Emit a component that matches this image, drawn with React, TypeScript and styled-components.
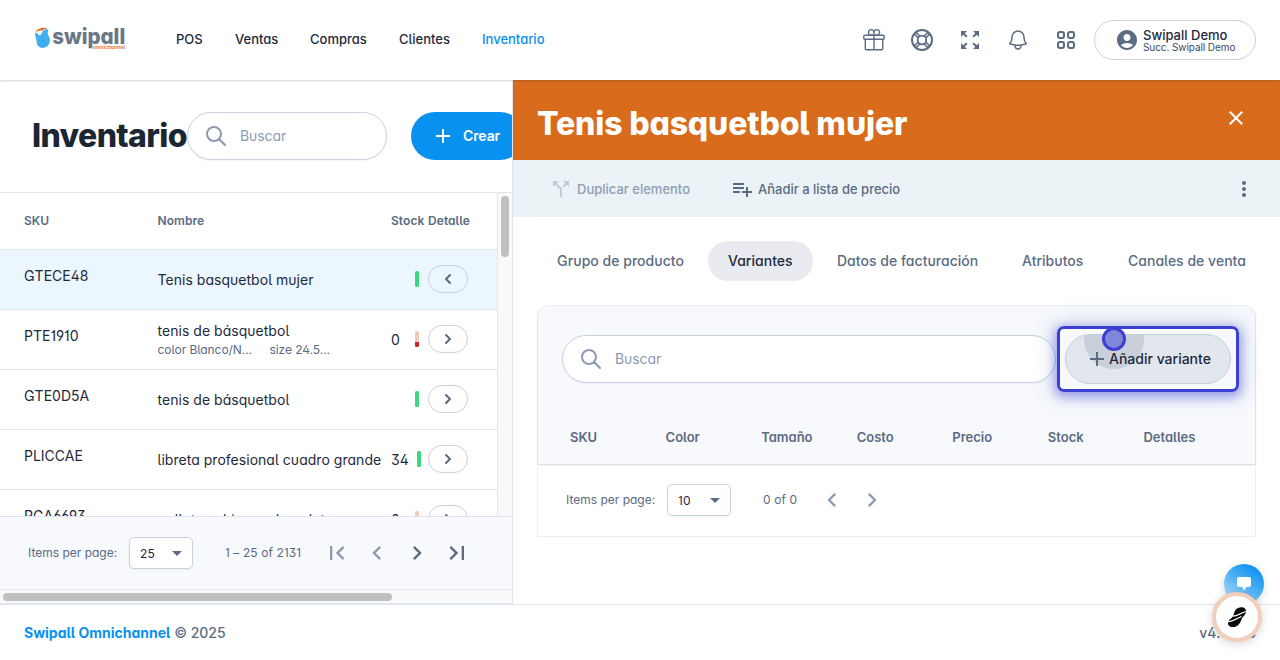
import React from "react";
import styled, { createGlobalStyle } from "styled-components";
import {
  MdAccountCircle,
  MdAdd,
  MdCallSplit,
  MdClose,
  MdMoreVert,
  MdPlaylistAdd,
  MdZoomOutMap,
  MdChevronLeft,
  MdChevronRight,
  MdFirstPage,
  MdLastPage,
} from "react-icons/md";
import { HiChevronLeft, HiChevronRight, HiOutlineSearch, HiOutlineViewGrid } from "react-icons/hi";
import { HiOutlineBell } from "react-icons/hi2";

const ink = "#1e293b";
const muted = "#5a6b82";
const faint = "#8d9bb0";
const line = "#dfe5ef";
const edge = "#c9d1e0";
const blue = "#0991f0";

const Global = createGlobalStyle`
  * { box-sizing: border-box; }
  body {
    margin: 0;
    font-family: Inter, sans-serif;
    font-size: 14px;
    color: ${ink};
    background: #fff;
    font-feature-settings: "cv01", "cv02", "cv03", "cv04", "cv05", "cv06", "cv09", "cv10", "cv11";
    overflow: hidden;
  }
  svg { display: block; flex: none; }
  button { font-family: inherit; cursor: pointer; }
`;

const Page = styled.div`
  display: flex;
  flex-direction: column;
  height: 660px;
  width: 1280px;
  position: relative;
`;

const TopBar = styled.header`
  height: 80px;
  display: flex;
  align-items: center;
  padding: 0 24px 0 35px;
  flex: none;
  background: #fff;
  position: relative;
  z-index: 2;
  box-shadow: 0 1px 2px rgba(30, 41, 80, 0.2);
`;

const Logo = styled.svg`
  width: 92px;
  height: 28px;
  margin-right: 25px;
`;

const Nav = styled.nav`
  display: flex;
  flex: 1;
`;

const NavItem = styled.a<{ $active?: boolean; $w: number }>`
  width: ${(p) => p.$w}px;
  padding: 0 0 2px 24px;
  font-size: 13px;
  font-weight: 500;
  line-height: 20px;
  letter-spacing: 0;
  white-space: nowrap;
  color: ${(p) => (p.$active ? blue : ink)};
`;

const Tools = styled.div`
  display: flex;
  gap: 24px;
  color: ${muted};
  margin-right: 16px;
`;

const Account = styled.div`
  width: 162px;
  height: 40px;
  border: 1px solid ${edge};
  border-radius: 20px;
  display: flex;
  align-items: center;
  gap: 4px;
  padding-left: 20px;
  color: ${muted};
  font-feature-settings: normal;
`;

const AccountText = styled.div`
  display: flex;
  flex-direction: column;
`;

const AccountName = styled.span`
  font-size: 13px;
  font-weight: 500;
  line-height: 14px;
  color: ${ink};
`;

const AccountBranch = styled.span`
  font-size: 10px;
  line-height: 11px;
  color: #3c4a60;
  letter-spacing: -0.08px;
`;

const Main = styled.main`
  display: flex;
  height: 524px;
  flex: none;
`;

const ListPane = styled.section`
  width: 513px;
  flex: none;
  border-right: 1px solid ${line};
  overflow: hidden;
  display: flex;
  flex-direction: column;
`;

const ListHead = styled.div`
  height: 113px;
  flex: none;
  border-bottom: 1px solid ${line};
  display: flex;
  align-items: center;
  padding-left: 32px;
`;

const Title = styled.h1`
  margin: 0;
  width: 155px;
  flex: none;
  font-size: 32px;
  font-weight: 800;
  letter-spacing: -0.64px;
  line-height: 40px;
  white-space: nowrap;
  color: #1a2733;
  font-feature-settings: normal;
`;

const SearchBox = styled.div<{ $w: number }>`
  width: ${(p) => p.$w}px;
  height: 48px;
  flex: none;
  border: 1px solid ${edge};
  border-radius: 24px;
  background: #fff;
  display: flex;
  align-items: center;
  gap: 12px;
  padding-left: 16px;
  color: ${faint};
  box-shadow: 0 1px 2px rgba(0, 0, 0, 0.05);
  span { padding-bottom: 2px; letter-spacing: -0.1px; }
`;

const CreateButton = styled.button`
  margin-left: 24px;
  height: 48px;
  width: 113px;
  flex: none;
  border: 0;
  border-radius: 24px;
  background: ${blue};
  color: #fff;
  display: flex;
  align-items: center;
  gap: 8px;
  padding: 0 0 0 20px;
  font-size: 14px;
  font-weight: 600;
  letter-spacing: -0.1px;
  span { padding-bottom: 2px; }
`;

const TableFrame = styled.div`
  height: 323px;
  flex: none;
  display: flex;
  overflow: hidden;
`;

const TableBody = styled.div`
  width: 497px;
  flex: none;
`;

const VTrack = styled.div`
  width: 15px;
  background: #f9f9fa;
  border-left: 1px solid #e5e6e8;
  padding: 3px 3px 0;
`;

const VThumb = styled.div`
  height: 61px;
  width: 8px;
  border-radius: 4px;
  background: #bfc0c2;
`;

const Row = styled.div<{ $head?: boolean; $selected?: boolean }>`
  display: grid;
  grid-template-columns: 133.5px 233.5px 37px 69px;
  height: ${(p) => (p.$head ? 57 : 60)}px;
  align-items: center;
  padding-left: 24px;
  border-bottom: 1px solid ${line};
  background: ${(p) => (p.$selected ? "#ebf6fe" : "#fff")};
  ${(p) => p.$head && `font-size: 12px; font-weight: 600; color: ${muted}; white-space: nowrap; padding-bottom: 1px; letter-spacing: 0.06px;`}
`;

const Sku = styled.div`
  padding-bottom: 9px;
`;

const Name = styled.div`
  display: flex;
  flex-direction: column;
  white-space: nowrap;
  letter-spacing: 0.03px;
  line-height: 20px;
`;

const Attributes = styled.div`
  display: flex;
  font-size: 12px;
  line-height: 17px;
  letter-spacing: -0.06px;
  color: ${muted};
  span:first-child { width: 112px; }
`;

const Stock = styled.div`
  display: flex;
  align-items: center;
  gap: 8px;
`;

const StockValue = styled.span`
  min-width: 16px;
`;

const StockBar = styled.span<{ $low?: boolean }>`
  width: 4px;
  height: 16px;
  margin-bottom: 2px;
  flex: none;
  border-radius: 1.5px;
  background: ${(p) => (p.$low ? "linear-gradient(#f0cdb8 11px, #e02128 11px)" : "#3cd880")};
`;

const DetailButton = styled.button`
  width: 40px;
  height: 28px;
  margin-bottom: 2px;
  border: 1px solid ${edge};
  border-radius: 14px;
  background: transparent;
  padding: 0;
  display: flex;
  align-items: center;
  justify-content: center;
  color: ${muted};
`;

const Pager = styled.div<{ $list?: boolean }>`
  height: ${(p) => (p.$list ? 73 : 72)}px;
  flex: none;
  display: flex;
  align-items: center;
  padding-left: 28px;
  font-size: 12px;
  letter-spacing: 0.1px;
  color: ${muted};
  white-space: nowrap;
  ${(p) => p.$list && `background: #f7f9fd; border-top: 1px solid ${line};`}
`;

const PagerLabel = styled.span`
  width: 101px;
  padding-bottom: 1px;
  letter-spacing: 0;
`;

const Select = styled.div`
  width: 64px;
  height: 32px;
  border: 1px solid ${edge};
  border-radius: 5px;
  background: #fff;
  display: flex;
  align-items: center;
  justify-content: space-between;
  padding: 0 10px;
  color: ${ink};
  box-shadow: 0 1px 2px rgba(0, 0, 0, 0.05);
`;

const Caret = styled.span`
  border: 5px solid transparent;
  border-top-color: ${muted};
  border-bottom: 0;
`;

const Range = styled.span<{ $w: number }>`
  margin-left: 32px;
  padding-bottom: 1px;
  width: ${(p) => p.$w}px;
`;

const PageButton = styled.span<{ $off?: boolean }>`
  width: 40px;
  height: 40px;
  display: flex;
  align-items: center;
  justify-content: center;
  color: ${(p) => (p.$off ? faint : muted)};
`;

const HTrack = styled.div`
  height: 15px;
  border-top: 1px solid #e8e9ec;
  border-bottom: 1px solid ${line};
  background: #f9f9fa;
  padding: 3px 0 0 3px;
`;

const HThumb = styled.div`
  height: 8px;
  width: 389px;
  border-radius: 4px;
  background: #bfc0c2;
`;

const DetailPane = styled.section`
  flex: 1;
  min-width: 0;
`;

const DetailHead = styled.div`
  height: 80px;
  background: #d96b1c;
  color: #fff;
  display: flex;
  justify-content: space-between;
  padding: 26px 32px 0 24px;
`;

const DetailTitle = styled.h2`
  margin: 0;
  font-size: 32px;
  line-height: 36px;
  font-weight: 800;
  letter-spacing: -0.16px;
  white-space: nowrap;
`;

const ActionBar = styled.div`
  height: 57px;
  background: #ebf3f7;
  display: flex;
  align-items: center;
  padding: 0 24px 0 36px;
  font-size: 13px;
  font-weight: 500;
  color: ${muted};
  font-feature-settings: normal;
`;

const Action = styled.div<{ $off?: boolean; $w: number }>`
  width: ${(p) => p.$w}px;
  display: flex;
  align-items: center;
  gap: 4px;
  white-space: nowrap;
  color: ${(p) => (p.$off ? "#8f9db0" : muted)};
  svg { opacity: ${(p) => (p.$off ? 0.45 : 1)}; }
`;

const Spacer = styled.div`
  flex: 1;
`;

const Tabs = styled.div`
  display: flex;
  gap: 4px;
  margin: 24px 0 24px 24px;
`;

const Tab = styled.div<{ $active?: boolean; $w: number }>`
  width: ${(p) => p.$w}px;
  flex: none;
  height: 40px;
  border-radius: 20px;
  line-height: 40px;
  padding-left: 20px;
  font-weight: 500;
  white-space: nowrap;
  letter-spacing: 0.02px;
  background: ${(p) => (p.$active ? "#eaebf1" : "transparent")};
  color: ${(p) => (p.$active ? ink : muted)};
`;

const Card = styled.div`
  margin: 0 24px;
  border: 1px solid #e9eff4;
  border-radius: 12px 12px 0 0;
  height: 232px;
`;

const CardHead = styled.div`
  height: 158px;
  background: #f7f9fd;
  border-radius: 11px 11px 0 0;
  box-shadow: 0 1px 2px rgba(30, 41, 80, 0.2);
  padding: 28px 24px 0;
`;

const CardTools = styled.div`
  display: flex;
  align-items: center;
  gap: 9px;
  height: 50px;
`;

const Highlight = styled.div`
  position: relative;
  width: 166px;
  height: 50px;
  &::before {
    content: "";
    position: absolute;
    inset: -8px;
    border: 3px solid #3b40d2;
    border-radius: 7px;
    box-shadow: 0 3px 10px 3px rgba(70, 75, 225, 0.42), 0 0 22px 7px rgba(60, 90, 140, 0.13);
  }
`;

const AddVariant = styled.button`
  position: relative;
  width: 166px;
  height: 50px;
  border: 1px solid #c5cdda;
  border-radius: 25px;
  background: #e2e6ed;
  overflow: hidden;
  display: flex;
  align-items: center;
  padding: 0 0 0 19px;
  font-size: 14px;
  font-weight: 500;
  white-space: nowrap;
  color: ${ink};
  svg, span { position: relative; }
  span { padding-bottom: 2px; }
  svg { color: ${muted}; }
  &::before {
    content: "";
    position: absolute;
    left: 18px;
    top: -26px;
    width: 60px;
    height: 60px;
    border-radius: 50%;
    background: #c9d0d9;
  }
`;

const Pointer = styled.div`
  position: absolute;
  left: 37px;
  top: -7px;
  width: 24px;
  height: 24px;
  border-radius: 50%;
  border: 3px solid #3b40d2;
  background: #8187d8;
`;

const Columns = styled.div`
  display: grid;
  grid-template-columns: repeat(7, 1fr);
  height: 57px;
  align-items: center;
  margin-top: 24px;
  font-size: 13px;
  font-weight: 600;
  color: ${muted};
  span { padding-left: 8px; }
`;

const Footer = styled.footer`
  height: 56px;
  border-top: 1px solid ${line};
  display: flex;
  justify-content: space-between;
  align-items: center;
  padding: 0 24px;
  font-weight: 500;
  color: ${muted};
  b { color: ${blue}; font-weight: 700; }
`;

const Version = styled.span`
  letter-spacing: 0.15px;
`;

const ChatBubble = styled.div`
  position: absolute;
  z-index: 3;
  left: 1224px;
  top: 564px;
  width: 40px;
  height: 40px;
  border-radius: 50%;
  background: linear-gradient(35deg, #b9d9fb 10%, #4db2f4 50%, #0a8df0 90%);
  box-shadow: 0 2px 8px rgba(0, 0, 0, 0.15);
  display: flex;
  align-items: center;
  justify-content: center;
`;

const AssistBubble = styled.div`
  position: absolute;
  z-index: 4;
  left: 1212px;
  top: 592px;
  width: 50px;
  height: 50px;
  border-radius: 50%;
  border: 4px solid #f1cfbb;
  background: #fff;
  box-shadow: 0 2px 10px rgba(0, 0, 0, 0.16);
  display: flex;
  align-items: center;
  justify-content: center;
`;

const GiftIcon = () => (
  <svg width="24" height="24" viewBox="0 0 24 24" fill="none" stroke="currentColor" strokeWidth="1.4">
    <rect x="1.8" y="7.2" width="20.4" height="4" rx="1" />
    <path d="M3.3 11.2v9.3a1.2 1.2 0 0 0 1.2 1.2h15a1.2 1.2 0 0 0 1.2-1.2v-9.3M12 7.2v14.5" />
    <path d="M12 7.2H9.4A2.8 2.8 0 1 1 12 4.5zM12 7.2h2.6A2.8 2.8 0 1 0 12 4.5z" />
  </svg>
);

const LifebuoyIcon = () => (
  <svg width="24" height="24" viewBox="0 0 24 24" fill="none" stroke="currentColor" strokeWidth="1.8">
    <circle cx="12" cy="12" r="10" strokeWidth="2" />
    <circle cx="12" cy="12" r="4.3" />
    <path
      strokeWidth="1.5"
      d="M8 9.800 4.600 6.400M9.800 8 6.400 4.600M14.200 8l3.400-3.400M16 9.800l3.400-3.400M16 14.200l3.400 3.400M14.200 16l3.400 3.400M9.800 16l-3.400 3.400M8 14.200l-3.400 3.400"
    />
  </svg>
);

const LogoWord = styled.text`
  font-feature-settings: "cv11";
`;

const SwipallLogo = () => (
  <Logo viewBox="0 0 92 28">
    <path
      fill="#3fb0ee"
      d="M0 7.500c.8-.8 2-.4 3 .8.900 1.100 1.900 1.300 2.800.5.900-.9 1.300-3 2.500-4.300 1.500-1.700 4.800-1.600 5.100-.4.2 1-.8 1.700-.7 3.200.1 2 2.300 3.900 2.300 7.300a7.200 7.200 0 0 1-7.100 7.300c-3.900 0-6.300-2.700-6.300-6.400 0-2.500-1.500-4-1.600-8z"
    />
    <path fill="#e2701f" d="M.4 6.600C1.600 3.200 7 .9 12.300 2.200c-2.200.5-4 .9-5.200 2.700C5.300 4 2.700 4.700.4 6.600z" />
    <circle cx="8.400" cy="14.500" r="1" fill="#2a9ade" />
    <LogoWord x="17.200" y="17.600" textLength="73" lengthAdjust="spacingAndGlyphs" fontSize="21.500" fontWeight="800" fill="#6b7686">
      swipall
    </LogoWord>
    <text x="58" y="22.600" textLength="32" lengthAdjust="spacingAndGlyphs" fontSize="4.800" fontWeight="700" fill="#e9783a">
      omnichannel
    </text>
  </Logo>
);

type Item = { sku: string; name: string; attrs?: string[]; stock?: string; low?: boolean; open?: boolean };

const items: Item[] = [
  { sku: "GTECE48", name: "Tenis basquetbol mujer", open: true },
  { sku: "PTE1910", name: "tenis de básquetbol", attrs: ["color Blanco/N...", "size 24.5..."], stock: "0", low: true },
  { sku: "GTE0D5A", name: "tenis de básquetbol" },
  { sku: "PLICCAE", name: "libreta profesional cuadro grande", stock: "34" },
  { sku: "PGA6693", name: "galletas chispas de paleta", stock: "0", low: true },
];

const columns = ["SKU", "Color", "Tamaño", "Costo", "Precio", "Stock", "Detalles"];

export default function App() {
  return (
    <Page>
      <Global />
      <TopBar>
        <SwipallLogo />
        <Nav>
          <NavItem $w={59}>POS</NavItem>
          <NavItem $w={75}>Ventas</NavItem>
          <NavItem $w={89}>Compras</NavItem>
          <NavItem $w={83}>Clientes</NavItem>
          <NavItem $w={100} $active>Inventario</NavItem>
        </Nav>
        <Tools>
          <GiftIcon />
          <LifebuoyIcon />
          <MdZoomOutMap size={24} />
          <HiOutlineBell size={24} />
          <HiOutlineViewGrid size={24} />
        </Tools>
        <Account>
          <MdAccountCircle size={24} />
          <AccountText>
            <AccountName>Swipall Demo</AccountName>
            <AccountBranch>Succ. Swipall Demo</AccountBranch>
          </AccountText>
        </Account>
      </TopBar>
      <Main>
        <ListPane>
          <ListHead>
            <Title>Inventario</Title>
            <SearchBox $w={200}>
              <HiOutlineSearch size={24} />
              <span>Buscar</span>
            </SearchBox>
            <CreateButton>
              <MdAdd size={24} />
              <span>Crear</span>
            </CreateButton>
          </ListHead>
          <TableFrame>
            <TableBody>
              <Row $head>
                <span>SKU</span>
                <span>Nombre</span>
                <span>Stock</span>
                <span>Detalle</span>
              </Row>
              {items.map((it) => (
                <Row key={it.sku} $selected={it.open}>
                  <Sku>{it.sku}</Sku>
                  <Name>
                    <span>{it.name}</span>
                    {it.attrs && (
                      <Attributes>
                        {it.attrs.map((a) => (
                          <span key={a}>{a}</span>
                        ))}
                      </Attributes>
                    )}
                  </Name>
                  <Stock>
                    <StockValue>{it.stock}</StockValue>
                    <StockBar $low={it.low} />
                  </Stock>
                  <DetailButton>{it.open ? <HiChevronLeft size={20} /> : <HiChevronRight size={20} />}</DetailButton>
                </Row>
              ))}
            </TableBody>
            <VTrack>
              <VThumb />
            </VTrack>
          </TableFrame>
          <Pager $list>
            <PagerLabel>Items per page:</PagerLabel>
            <Select>
              25 <Caret />
            </Select>
            <Range $w={92}>1 – 25 of 2131</Range>
            <PageButton $off><MdFirstPage size={28} /></PageButton>
            <PageButton $off><MdChevronLeft size={28} /></PageButton>
            <PageButton><MdChevronRight size={28} /></PageButton>
            <PageButton><MdLastPage size={28} /></PageButton>
          </Pager>
          <HTrack>
            <HThumb />
          </HTrack>
        </ListPane>
        <DetailPane>
          <DetailHead>
            <DetailTitle>Tenis basquetbol mujer</DetailTitle>
            <MdClose size={24} />
          </DetailHead>
          <ActionBar>
            <Action $w={181} $off>
              <MdCallSplit size={24} />
              Duplicar elemento
            </Action>
            <Action $w={180}>
              <MdPlaylistAdd size={24} />
              Añadir a lista de precio
            </Action>
            <Spacer />
            <MdMoreVert size={24} />
          </ActionBar>
          <Tabs>
            <Tab $w={167}>Grupo de producto</Tab>
            <Tab $w={105} $active>Variantes</Tab>
            <Tab $w={181}>Datos de facturación</Tab>
            <Tab $w={102}>Atributos</Tab>
            <Tab $w={150}>Canales de venta</Tab>
          </Tabs>
          <Card>
            <CardHead>
              <CardTools>
                <SearchBox $w={494}>
                  <HiOutlineSearch size={24} />
                  <span>Buscar</span>
                </SearchBox>
                <Highlight>
                  <AddVariant>
                    <MdAdd size={24} />
                    <span>Añadir variante</span>
                  </AddVariant>
                  <Pointer />
                </Highlight>
              </CardTools>
              <Columns>
                {columns.map((c) => (
                  <span key={c}>{c}</span>
                ))}
              </Columns>
            </CardHead>
            <Pager>
              <PagerLabel>Items per page:</PagerLabel>
              <Select>
                10 <Caret />
              </Select>
              <Range $w={49}>0 of 0</Range>
              <PageButton $off><MdChevronLeft size={28} /></PageButton>
              <PageButton $off><MdChevronRight size={28} /></PageButton>
            </Pager>
          </Card>
        </DetailPane>
      </Main>
      <Footer>
        <span>
          <b>Swipall Omnichannel</b> © 2025
        </span>
        <Version>v4.10.38</Version>
      </Footer>
      <ChatBubble>
        <svg width="18" height="18" viewBox="0 0 18 18" fill="#fff">
          <path d="M4 2h10a2 2 0 0 1 2 2v6a2 2 0 0 1-2 2h-2.500l-2.500 3.500L7.200 12H4a2 2 0 0 1-2-2V4a2 2 0 0 1 2-2z" />
        </svg>
      </ChatBubble>
      <AssistBubble>
        <svg width="22" height="22" viewBox="0 0 22 22">
          <path
            fill="#0a0a0a"
            d="M9.500 4C12 .8 16.800.2 19 2.600c2 2.300 1 5-.8 6.900-1.600 1.700-2.400 3-3 4.700-1.200 3.600-4 6.600-8 6.900-3.900.2-6.200-2.600-5-5.600 1-2.400 3.500-3 4.700-5.100C8.100 8.100 8 6 9.500 4z"
          />
          <path fill="none" stroke="#fff" strokeWidth="1.200" d="M7 10.200c4.500-.2 7.500-3.200 13-4.700M2 15.800c5-.3 8.500-3.300 13.500-5.300" />
        </svg>
      </AssistBubble>
    </Page>
  );
}
